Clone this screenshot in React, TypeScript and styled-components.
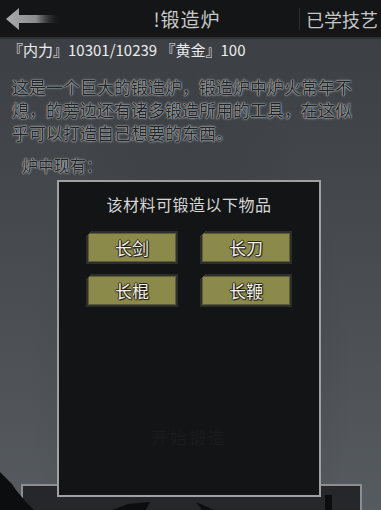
import React from 'react';
import styled, { createGlobalStyle } from 'styled-components';

const GlobalStyle = createGlobalStyle`
  html, body {
    margin: 0;
    padding: 0;
    background: #3d4145;
  }
  body {
    font-family: "Noto Sans CJK SC", "Noto Sans", sans-serif;
  }
`;

const Screen = styled.div`
  position: relative;
  width: 381px;
  height: 510px;
  overflow: hidden;
  display: flex;
  flex-direction: column;
  background:
    radial-gradient(ellipse at 50% 75%, rgba(30, 33, 36, 0.35) 0%, rgba(30, 33, 36, 0) 60%),
    linear-gradient(180deg, #3a3e42 0%, #464a4f 45%, #565b60 100%);
`;

const Header = styled.div`
  height: 37px;
  flex-shrink: 0;
  display: flex;
  align-items: center;
  background: #141516;
  border-bottom: 2px solid #2e3134;
`;

const BackButton = styled.div`
  width: 75px;
  height: 100%;
  box-sizing: border-box;
  display: flex;
  align-items: center;
  padding-left: 5px;
`;

const Title = styled.div`
  flex: 1;
  text-align: center;
  font-size: 19px;
  color: #c9c9c9;
  letter-spacing: 1px;
`;

const SideLink = styled.div`
  height: 22px;
  display: flex;
  align-items: center;
  padding: 0 3px 0 6px;
  border-left: 1px solid #2a2c2e;
  font-size: 18px;
  color: #c6c6c6;
`;

const Body = styled.div`
  flex: 1;
  display: flex;
  flex-direction: column;
`;

const Stats = styled.div`
  padding: 1px 0 0 8px;
  font-size: 15px;
  line-height: 20px;
  color: #ececec;
`;

const OutlinedText = styled.div`
  color: #202428;
  text-shadow:
    0 0 1px #d0d4d0,
    0 0 1px #d0d4d0,
    0 0 3px rgba(200, 205, 200, 0.6);
`;

const Description = styled(OutlinedText)`
  width: 342px;
  padding: 15px 0 0 12px;
  font-size: 17px;
  line-height: 23px;
`;

const FurnaceLabel = styled(OutlinedText)`
  padding: 10px 0 0 22px;
  font-size: 16px;
  line-height: 22px;
`;

const Spacer = styled.div`
  flex: 1;
`;

const BottomPanel = styled.div`
  margin: 0 19px 0 21px;
  height: 24px;
  border: 2px solid #8c8e90;
  border-bottom: none;
  background: #25272a;
`;

const Anvil = styled.svg`
  position: absolute;
  left: 0;
  bottom: 0;
`;

const Modal = styled.div`
  position: absolute;
  left: 57px;
  top: 180px;
  width: 260px;
  height: 313px;
  border: 2px solid #9ea0a2;
  background: #121416;
  display: flex;
  flex-direction: column;
  align-items: center;
`;

const ModalTitle = styled.div`
  margin-top: 11px;
  font-size: 16px;
  line-height: 22px;
  color: #d6d6d6;
  letter-spacing: 0.5px;
`;

const ItemGrid = styled.div`
  margin-top: 16px;
  display: grid;
  grid-template-columns: 92px 92px;
  column-gap: 22px;
  row-gap: 10px;
`;

const ItemButton = styled.div`
  position: relative;
  height: 33px;
  box-sizing: border-box;
  border: 2px solid #2c2e2a;
  background: #8c8a4a;
  box-shadow: inset 0 0 0 1px #5e5d3a, 0 0 0 1px #1c1d1b;
  display: flex;
  align-items: center;
  justify-content: center;
  font-size: 17px;
  color: #f2f2e6;
  text-shadow:
    1px 0 0 #24241c,
    -1px 0 0 #24241c,
    0 1px 0 #24241c,
    0 -1px 0 #24241c,
    1px 1px 1px #24241c;
  clip-path: polygon(6px 0, 100% 0, 100% 100%, 0 100%, 0 6px);
`;

const FaintAction = styled.div`
  margin-top: auto;
  margin-bottom: 46px;
  font-size: 17px;
  color: #191b1d;
  letter-spacing: 2px;
`;

const items = ['长剑', '长刀', '长棍', '长鞭'];

const BackArrow = () => (
  <svg width="56" height="24" viewBox="0 0 56 24">
    <defs>
      <linearGradient id="arrowFade" x1="0" x2="1" y1="0" y2="0">
        <stop offset="0" stopColor="#a9abad" />
        <stop offset="0.55" stopColor="#8a8c8e" />
        <stop offset="1" stopColor="#141516" stopOpacity="0" />
      </linearGradient>
    </defs>
    <path d="M1 12 L14 1 L14 8 L56 8 L56 16 L14 16 L14 23 Z" fill="url(#arrowFade)" />
  </svg>
);

const App: React.FC = () => {
  return (
    <>
      <GlobalStyle />
      <Screen>
        <Header>
          <BackButton>
            <BackArrow />
          </BackButton>
          <Title>!锻造炉</Title>
          <SideLink>已学技艺</SideLink>
        </Header>

        <Body>
          <Stats>『内力』10301/10239 『黄金』100</Stats>
          <Description>
            这是一个巨大的锻造炉，锻造炉中炉火常年不熄，的旁边还有诸多锻造所用的工具，在这似乎可以打造自己想要的东西。
          </Description>
          <FurnaceLabel>炉中现有：</FurnaceLabel>
          <Spacer />
          <BottomPanel />
        </Body>

        <Anvil width="381" height="60" viewBox="0 0 381 60">
          <path d="M0 22 L12 34 L16 40 L26 52 L34 60 L0 60 Z" fill="#0c0d0e" />
          <path d="M112 60 L128 54 L150 52 L146 60 Z" fill="#0c0d0e" />
          <path d="M196 52 L214 60 L202 60 Z" fill="#0c0d0e" />
          <path d="M325 45 L332 45 L332 60 L325 60 Z" fill="#0c0d0e" />
        </Anvil>

        <Modal>
          <ModalTitle>该材料可锻造以下物品</ModalTitle>
          <ItemGrid>
            {items.map((name) => (
              <ItemButton key={name}>{name}</ItemButton>
            ))}
          </ItemGrid>
          <FaintAction>开始锻造</FaintAction>
        </Modal>
      </Screen>
    </>
  );
};

export default App;
